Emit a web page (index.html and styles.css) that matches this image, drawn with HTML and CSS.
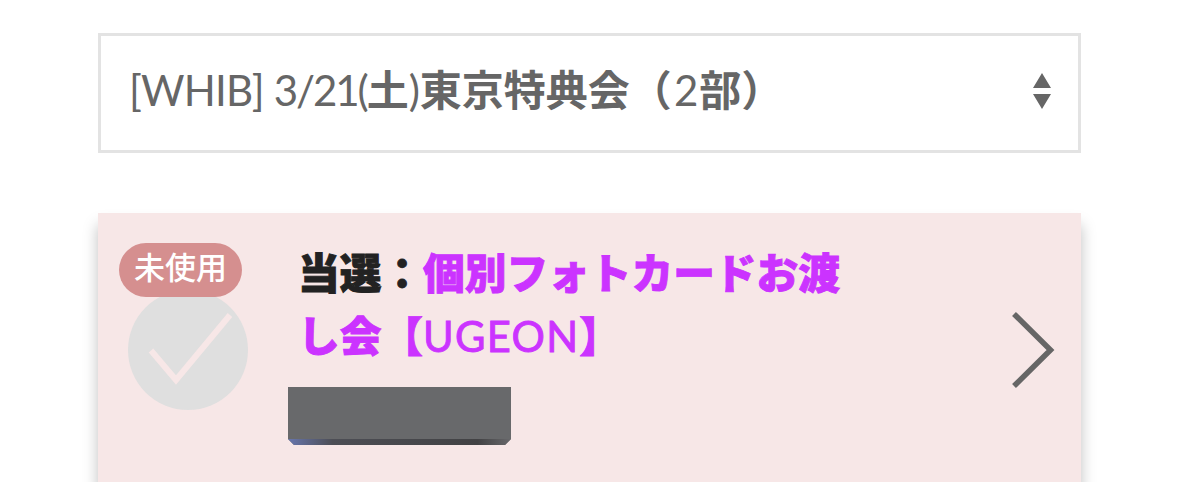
FILE: index.html
```
<!DOCTYPE html>
<html lang="ja">
<head>
    <meta charset="UTF-8">
    <meta name="viewport" content="width=device-width, initial-scale=1.0">
    <title>特典会チケット</title>
    <link rel="stylesheet" href="styles.css">
</head>
<body>

<div class="event-select">
    <div class="event-name"><span class="latin group">[WHIB] </span><span class="latin date">3/21(</span>土<span class="latin">)</span>東京特典会（<span class="latin part">2</span>部）</div>
    <svg class="select-arrows" width="20" height="36" viewBox="0 0 20 36">
        <path d="M10 0L19 15H1Z M1 21H19L10 36Z" fill="#666"/>
    </svg>
</div>

<div class="ticket">
    <div class="ticket-status">
        <span class="badge">未使用</span>
        <svg class="check" width="120" height="120" viewBox="0 0 120 120">
            <circle cx="60" cy="60" r="60" fill="#dfdfdf"/>
            <path d="M23 60.5L48 90L102 25" fill="none" stroke="#f7e7e7" stroke-width="6"/>
        </svg>
    </div>
    <div class="ticket-body">
        <div class="ticket-title">当選：<span class="prize">個別フォトカードお渡<br>し会【<span class="latin">UGEON</span>】</span></div>
        <svg class="masked" width="223" height="58" viewBox="0 0 223 58">
            <defs>
                <linearGradient id="edge">
                    <stop offset="0" stop-color="#6876ad"/>
                    <stop offset="0.2" stop-color="#4d4e55"/>
                    <stop offset="0.85" stop-color="#424244"/>
                    <stop offset="1" stop-color="#68686b"/>
                </linearGradient>
            </defs>
            <path d="M0 0H223V52L217 58H6L0 52Z" fill="#68696b"/>
            <path d="M0 52H223L217 58H6Z" fill="url(#edge)"/>
        </svg>
    </div>
    <svg class="chevron" width="44" height="78" viewBox="0 0 44 78">
        <path d="M3 3L39.5 39L3 75" fill="none" stroke="#666" stroke-width="5.5"/>
    </svg>
</div>

</body>
</html>
```
FILE: styles.css
```
* {
    box-sizing: border-box;
}
body {
    margin: 0;
    height: 482px;
    padding: 33px 98px 0;
    overflow: hidden;
    background-color: #fff;
    font-family: "Noto Sans CJK JP", sans-serif;
}
.latin {
    font-family: Lato, "Open Sans", sans-serif;
    font-weight: 400;
}
.event-select {
    display: flex;
    align-items: center;
    justify-content: space-between;
    width: 983px;
    height: 120px;
    padding: 0 26px 6px 28px;
    border: 3px solid #e3e3e3;
    color: #666;
}
.event-name {
    margin-top: -3px;
    font-size: 42px;
    font-weight: 700;
    line-height: 60px;
    white-space: nowrap;
}
.group {
    letter-spacing: -0.8px;
}
.date {
    letter-spacing: -2.1px;
}
.part {
    margin: 0 1px 0 2px;
}
.select-arrows {
    margin-top: 2px;
}
.ticket {
    display: flex;
    align-items: flex-start;
    width: 983px;
    height: 269px;
    margin-top: 60px;
    padding: 30px 26px 0 21px;
    background-color: #f7e7e7;
    box-shadow: 0 12px 14px rgba(0, 0, 0, 0.25);
}
.ticket-status {
    display: flex;
    flex-direction: column;
    width: 180px;
}
.badge {
    z-index: 1;
    width: 123px;
    height: 54px;
    border-radius: 27px;
    background-color: #d58f8f;
    color: #fff;
    font-size: 31px;
    font-weight: 500;
    line-height: 46px;
    text-align: center;
}
.check {
    margin: -7px 0 0 9px;
}
.ticket-body {
    flex: 1;
}
.ticket-title {
    margin: -3px 0 0 -1px;
    color: #222;
    font-size: 41.7px;
    font-weight: 900;
    line-height: 62.5px;
    white-space: nowrap;
    -webkit-text-stroke: 0.9px;
}
.prize {
    color: #cb33ff;
}
.prize .latin {
    letter-spacing: 1.3px;
}
.masked {
    display: block;
    margin: 20px 0 0 -11px;
}
.chevron {
    margin-top: 68px;
}
```
